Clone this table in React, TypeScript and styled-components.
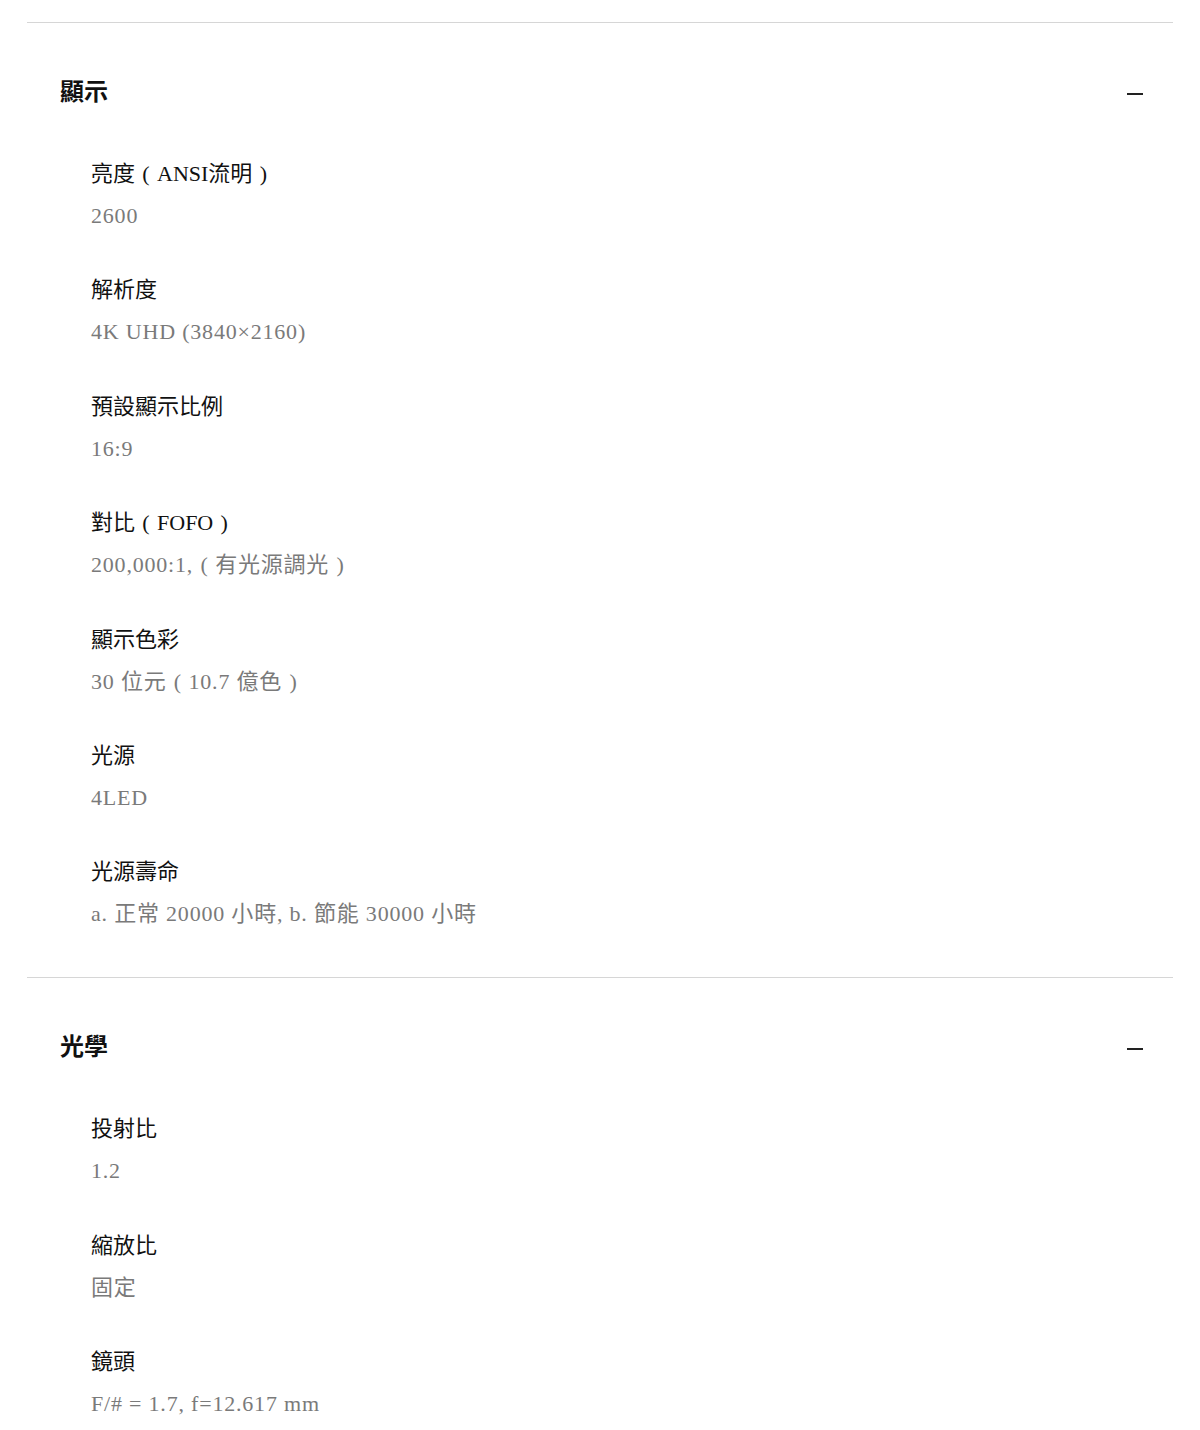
import React from "react";
import styled, { createGlobalStyle } from "styled-components";

const Global = createGlobalStyle`
  html, body { margin: 0; padding: 0; background: #fff; }
  body { font-family: "Liberation Serif", "Noto Sans CJK TC", serif; }
`;

const Page = styled.div`
  padding: 22px 27px 0;
`;

const Section = styled.section`
  border-top: 1px solid #d6d6d6;
  padding: 53px 30px 47px 33px;
`;

const Header = styled.div`
  display: flex;
  align-items: center;
  justify-content: space-between;
  height: 32px;
`;

const Title = styled.h2`
  margin: 0;
  font-family: "Liberation Sans", "Noto Sans CJK TC", sans-serif;
  font-weight: 700;
  font-size: 24px;
  line-height: 32px;
  color: #111;
`;

const Minus = styled.span`
  display: block;
  width: 16px;
  height: 2px;
  background: #222;
  margin-top: 4px;
`;

const List = styled.dl`
  margin: 50px 0 0 31px;
  display: flex;
  flex-direction: column;
  gap: 42.4px;
`;

const Item = styled.div`
  display: flex;
  flex-direction: column;
  gap: 10px;
`;

const Label = styled.dt`
  margin: 0;
  font-size: 22px;
  line-height: 32px;
  color: #111;
`;

const Value = styled.dd`
  margin: 0;
  font-size: 22px;
  line-height: 32px;
  letter-spacing: 0.8px;
  color: #7a7a7a;
`;

const Paren = styled.span`
  display: inline-block;
  width: 1em;
  text-align: center;
  font-family: "Liberation Serif", serif;
  letter-spacing: 0;
`;

function renderText(text: string) {
  const parts = text.split(/([（）])/);
  return parts.map((p, i) =>
    p === "（" ? (
      <Paren key={i}>(</Paren>
    ) : p === "）" ? (
      <Paren key={i}>)</Paren>
    ) : (
      <React.Fragment key={i}>{p}</React.Fragment>
    )
  );
}

type Spec = { label: string; value: string };

const sections: { title: string; specs: Spec[] }[] = [
  {
    title: "顯示",
    specs: [
      { label: "亮度（ANSI流明）", value: "2600" },
      { label: "解析度", value: "4K UHD (3840×2160)" },
      { label: "預設顯示比例", value: "16:9" },
      { label: "對比（FOFO）", value: "200,000:1,（有光源調光）" },
      { label: "顯示色彩", value: "30 位元（10.7 億色）" },
      { label: "光源", value: "4LED" },
      { label: "光源壽命", value: "a. 正常 20000 小時, b. 節能 30000 小時" },
    ],
  },
  {
    title: "光學",
    specs: [
      { label: "投射比", value: "1.2" },
      { label: "縮放比", value: "固定" },
      { label: "鏡頭", value: "F/# = 1.7, f=12.617 mm" },
    ],
  },
];

export default function App() {
  return (
    <>
      <Global />
      <Page>
        {sections.map((s) => (
          <Section key={s.title}>
            <Header>
              <Title>{s.title}</Title>
              <Minus />
            </Header>
            <List>
              {s.specs.map((sp) => (
                <Item key={sp.label}>
                  <Label>{renderText(sp.label)}</Label>
                  <Value>{renderText(sp.value)}</Value>
                </Item>
              ))}
            </List>
          </Section>
        ))}
      </Page>
    </>
  );
}
